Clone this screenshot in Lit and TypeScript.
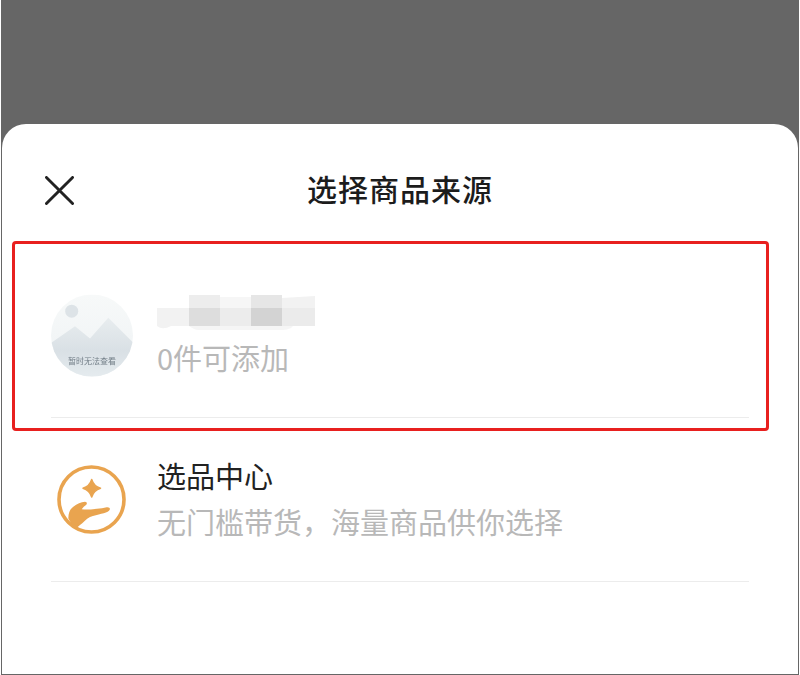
import { LitElement, html, css, svg } from "lit";
import { customElement } from "lit/decorators.js";

const avatar = svg`<svg class="art" viewBox="0 0 82 82" width="82" height="83" aria-hidden="true">
  <defs>
    <linearGradient id="sky" x1="0" y1="0" x2="0" y2="1"><stop offset="0" stop-color="#f7f9f9"/><stop offset="1" stop-color="#eef2f4"/></linearGradient>
    <linearGradient id="hill" x1="0" y1="0" x2="0" y2="1"><stop offset="0" stop-color="#e8edef"/><stop offset=".55" stop-color="#d9e0e5"/><stop offset="1" stop-color="#e6ecef"/></linearGradient>
    <clipPath id="disc"><circle cx="41" cy="41" r="41"/></clipPath>
  </defs>
  <g clip-path="url(#disc)">
    <rect width="82" height="82" fill="url(#sky)"/>
    <circle cx="20.7" cy="16.7" r="6.5" fill="#dde3e7"/>
    <path d="M-2 50 L24 31.7 L39 44 L57.3 23.3 L84 50 V84 H-2 Z" fill="url(#hill)"/>
  </g>
  <text x="41" y="69" text-anchor="middle" font-size="8" fill="#727e87">暂时无法查看</text>
</svg>`;

const handIcon = svg`<svg viewBox="0 0 72 72" width="72" height="72" aria-hidden="true">
  <circle cx="35.5" cy="35.5" r="32.5" fill="none" stroke="#e9a44f" stroke-width="3.6"/>
  <path d="M35.700 15.500 C37.200 20.500 39.500 22.800 44.500 24.300 C39.500 25.800 37.200 28.100 35.700 33 C34.200 28.100 31.900 25.800 27 24.300 C31.900 22.800 34.200 20.500 35.700 15.500 Z" fill="#e9a44f" stroke="#e9a44f" stroke-width="1.500" stroke-linejoin="round"/>
  <path d="M12.300 54.300 C12.500 48 14.500 44.500 17.300 42.700 C21 39.500 25 38 29 37.700 C31 37.700 31.500 40 30 41 C28.500 42 27 43.500 25.700 45.300 C33 46 43 45 50.700 43.300 C53.500 42.800 55 45 53 46.800 C50 49.300 42 50.500 34 53 C30 55 27 59 24 61 C22 62.800 20.500 64 19 64.300 C16 60.500 13.800 57.500 12.300 54.300 Z" fill="#e9a44f"/>
</svg>`;

const closeIcon = svg`<svg viewBox="0 0 30 30" width="29" height="29" aria-hidden="true">
  <path d="M1.500 1.500 L28.500 28.500 M28.500 1.500 L1.500 28.500" stroke="#222" stroke-width="3" stroke-linecap="round" fill="none"/>
</svg>`;

const mosaic = svg`<svg class="mosaic" viewBox="0 0 158 46" width="158" height="46" aria-hidden="true">
  <path d="M0 20 H32 V38 H14 C8 41 4 41 0 38 Z" fill="#f2f2f2"/>
  <rect x="32" y="7" width="31" height="13" fill="#ededed"/>
  <rect x="32" y="20" width="31" height="18" fill="#dddddd"/>
  <rect x="63" y="9" width="31" height="11" fill="#f6f6f6"/>
  <rect x="63" y="20" width="31" height="18" fill="#ececec"/>
  <rect x="94" y="7" width="31" height="13" fill="#e6e6e6"/>
  <rect x="94" y="20" width="31" height="18" fill="#d3d3d3"/>
  <path d="M125 10 L158 8 V20 H125 Z" fill="#f2f2f2"/>
  <rect x="125" y="20" width="33" height="18" fill="#ebebeb"/>
  <path d="M32 38 H136 C132 43 124 42 110 42 H42 C38 42 35 40 32 38 Z" fill="#f5f5f5"/>
</svg>`;

@customElement("app-root")
export class AppRoot extends LitElement {
  static styles = css`
    :host {
      display: block;
      width: 800px;
      height: 675px;
      padding: 0 1px;
      box-sizing: border-box;
      background: #fff;
      position: relative;
      font-family: "Noto Sans CJK SC", "Noto Sans", sans-serif;
    }
    .frame {
      height: 100%;
      box-sizing: border-box;
      background: #666;
      padding: 124px 1px 1px;
      display: flex;
    }
    .sheet {
      flex: 1;
      background: #fff;
      border-radius: 24px 24px 0 0;
      display: flex;
      flex-direction: column;
    }
    .header {
      display: grid;
      grid-template-columns: 1fr auto 1fr;
      align-items: center;
      padding: 44px 43px 42px;
    }
    .close { display: flex; }
    .title {
      font-size: 30px;
      line-height: 40px;
      font-weight: 500;
      color: #1c1c1c;
      letter-spacing: 1px;
      margin-bottom: 4px;
    }
    .list { margin: 0 49px; display: flex; flex-direction: column; }
    .row {
      height: 163px;
      border-bottom: 1px solid #ececec;
      display: flex;
      align-items: center;
      gap: 24px;
    }
    .thumb { width: 82px; height: 82px; display: flex; align-items: center; justify-content: center; flex: none; }
    .art { filter: blur(0.6px); }
    .mosaic { display: block; filter: blur(0.5px); }
    .text { display: flex; flex-direction: column; margin-bottom: 4px; }
    .name { font-size: 29px; line-height: 46px; color: #222; }
    .sub { font-size: 29px; line-height: 46px; color: #b8b8b8; }
    .mark {
      position: absolute;
      left: 12px;
      top: 241px;
      width: 757px;
      height: 190px;
      box-sizing: border-box;
      border: 3px solid #e8201f;
      border-radius: 4px;
      pointer-events: none;
    }
  `;

  render() {
    return html`
      <div class="frame">
        <div class="sheet">
          <div class="header">
            <div class="close">${closeIcon}</div>
            <div class="title">选择商品来源</div>
          </div>
          <div class="list">
            <div class="row">
              <div class="thumb">${avatar}</div>
              <div class="text">
                ${mosaic}
                <div class="sub">0件可添加</div>
              </div>
            </div>
            <div class="row">
              <div class="thumb">${handIcon}</div>
              <div class="text">
                <div class="name">选品中心</div>
                <div class="sub">无门槛带货，海量商品供你选择</div>
              </div>
            </div>
          </div>
        </div>
      </div>
      <div class="mark"></div>
    `;
  }
}
